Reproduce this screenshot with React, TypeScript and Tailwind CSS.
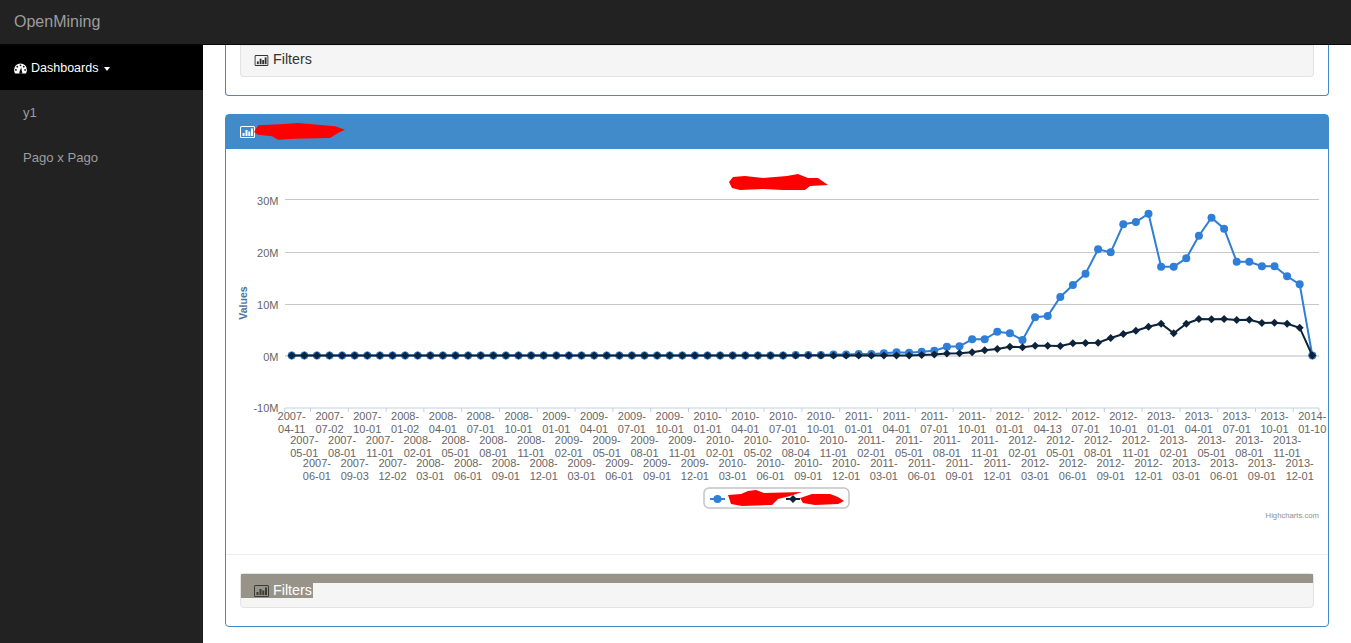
const SERIES_A = [
  ...Array(40).fill(355.5),
  355, 355, 355, 354.5, 354.5, 354, 354, 353.3, 352.3, 352.7, 351.7, 350.7, 346.7,
  346.3, 339.3, 339.3, 331.7, 333.3, 340, 317.3, 316, 297, 285, 273.7, 249.3, 252.3, 224.3, 222,
  213.7, 266.7, 266.7, 258.3, 235.7, 217.7, 228.7, 261.7, 261.7, 266.3, 266.3, 276.3, 284.3, 355.5,
];

const SERIES_B = [
  ...Array(47).fill(355.5),
  355.5, 355.5, 355.5, 355, 354.5, 353.5,
  353.3, 352.3, 350.3, 349, 346.7, 347.3, 345.7, 345.7, 346, 343.3, 343, 342.7, 338, 334,
  330.7, 326.7, 323.7, 333.3, 323.7, 319, 319.3, 319, 320, 319.7, 323, 322.7, 323.7, 327.7, 355.5,
];

// days that are not the first of the month, by yyyy-mm
const ODD_DAYS: Record<string, string> = {
  '2007-04': '11', '2007-07': '02', '2007-09': '03', '2007-12': '02', '2008-01': '02',
  '2010-05': '02', '2010-08': '04', '2012-04': '13', '2014-01': '10',
};

const pointX = (i: number) => 291.7 + i * 12.6;

const CATEGORIES = Array.from({ length: 82 }, (_, i) => {
  const total = 2007 * 12 + 3 + i;
  const year = Math.floor(total / 12);
  const month = String((total % 12) + 1).padStart(2, '0');
  return { year, rest: `${month}-${ODD_DAYS[`${year}-${month}`] ?? '01'}` };
});

const ROW_BASELINE = [420, 444, 467];

const Y_LABELS = [
  { text: '30M', y: 204.5 },
  { text: '20M', y: 257 },
  { text: '10M', y: 309 },
  { text: '0M', y: 361 },
  { text: '-10M', y: 412 },
];

function BarIcon({ className }: { className: string }) {
  return (
    <svg viewBox="0 0 15 12" className={className} fill="currentColor">
      <path fillRule="evenodd" d="M1.5 0h12A1.5 1.5 0 0 1 15 1.5v9a1.5 1.5 0 0 1-1.5 1.5h-12A1.5 1.5 0 0 1 0 10.500v-9A1.500 1.500 0 0 1 1.500 0Zm0 1a.5.5 0 0 0-.5.5v9a.5.5 0 0 0 .5.5h12a.5.5 0 0 0 .5-.5v-9a.5.5 0 0 0-.5-.5Z" />
      <rect x="2.500" y="7" width="2" height="3" />
      <rect x="5.500" y="4" width="2" height="6" />
      <rect x="8.300" y="5.500" width="2" height="4.500" />
      <rect x="11" y="2.500" width="2" height="7.500" />
    </svg>
  );
}

function GaugeIcon() {
  return (
    <svg viewBox="0 0 14 12" className="h-[11px] w-[13px] shrink-0">
      <path fill="#fff" d="M7 0.500a7 7 0 0 1 7 7c0 1.500-.4 2.900-1.200 4H1.200A7 7 0 0 1 0 7.500a7 7 0 0 1 7-7Z" />
      <g fill="#111">
        <circle cx="7" cy="2.500" r="1" />
        <circle cx="3.500" cy="4" r="1" />
        <circle cx="2" cy="7.500" r="1" />
        <circle cx="12" cy="7.500" r="1" />
        <circle cx="10.500" cy="4" r="1" />
        <path d="M7.800 4.500 8.700 9.500a1.600 1.600 0 1 1-3 .2Z" />
      </g>
    </svg>
  );
}

function Chart() {
  const lineA = SERIES_A.map((y, i) => `${pointX(i)},${y}`).join(' ');
  const lineB = SERIES_B.map((y, i) => `${pointX(i)},${y}`).join(' ');
  const ticks = [284.7, ...Array.from({ length: 28 }, (_, i) => 310.5 + i * 37.8), 1319];

  return (
    <svg viewBox="226 149 1102 405" className="block h-[405px] w-full">
      <path
        fill="#ff0000"
        d="M729 182 733 177 745 176 763 178 787 176 798 174 808 178 818 178 828 185 810 186 805 190 783 190 763 189 740 190 732 188Z"
      />
      {[199.5, 252.5, 304.5].map((y) => (
        <line key={y} x1="285" x2="1319" y1={y} y2={y} stroke="#c8c8c8" />
      ))}
      <line x1="285" x2="1319" y1="356" y2="356" stroke="#dddddd" strokeWidth="2" />
      <line x1="285" x2="1319" y1="408" y2="408" stroke="#c0d0e0" />
      {ticks.map((x) => (
        <line key={x} x1={x} x2={x} y1="408" y2="412" stroke="#c0d0e0" />
      ))}

      {Y_LABELS.map(({ text, y }) => (
        <text key={text} x="278.500" y={y} textAnchor="end" fontSize="11" fill="#666666">{text}</text>
      ))}
      <text
        transform="translate(247 303) rotate(-90)"
        textAnchor="middle"
        fontSize="10.500"
        fontWeight="bold"
        fill="#4d759e"
      >
        Values
      </text>

      {CATEGORIES.map(({ year, rest }, i) => {
        const base = ROW_BASELINE[i % 3];
        const x = pointX(i);
        return (
          <text key={i} textAnchor="middle" fontSize="11" fill="#666666">
            <tspan x={x} y={base}>{year}-</tspan>
            <tspan x={x} y={base + 13}>{rest}</tspan>
          </text>
        );
      })}

      <polyline points={lineA} fill="none" stroke="#2f7ed8" strokeWidth="2" />
      {SERIES_A.map((y, i) => (
        <circle key={i} cx={pointX(i)} cy={y} r="4" fill="#2f7ed8" />
      ))}
      <polyline points={lineB} fill="none" stroke="#0d233a" strokeWidth="2" />
      {SERIES_B.map((y, i) => {
        const x = pointX(i);
        return <path key={i} d={`M${x} ${y - 4}L${x + 4} ${y}L${x} ${y + 4}L${x - 4} ${y}Z`} fill="#0d233a" />;
      })}

      <rect x="704" y="488" width="145" height="20" rx="5" fill="#ffffff" stroke="#c4c4c4" strokeWidth="1.500" />
      <line x1="710" x2="725" y1="499" y2="499" stroke="#2f7ed8" strokeWidth="2" />
      <circle cx="717.500" cy="499" r="4" fill="#2f7ed8" />
      <line x1="786" x2="800" y1="499" y2="499" stroke="#0d233a" strokeWidth="2" />
      <path d="M793 495L797 499L793 503L789 499Z" fill="#0d233a" />
      <path
        fill="#ff0000"
        d="M728 495 741 494 748 491 756 490 764 493 802 492 790 496 778 499 772 505 742 506 731 504Z"
      />
      <path
        fill="#ff0000"
        d="M800 498 812 494 830 494 838 497 844 501 838 504 815 505 803 503Z"
      />

      <text x="1319" y="518" textAnchor="end" fontSize="7.700" fill="#909090">Highcharts.com</text>
    </svg>
  );
}

export default function App() {
  return (
    <div className="flex h-[643px] flex-col overflow-hidden bg-white font-['Liberation_Sans',Arial,sans-serif] text-[14.300px] text-[#333333]">
      <nav className="flex h-[45px] shrink-0 items-center border-b border-[#080808] bg-[#222222] px-[14px] pb-[1px] text-[16px] text-[#9d9d9d]">
        OpenMining
      </nav>
      <div className="flex min-h-0 flex-1">
        <aside className="w-[203px] shrink-0 bg-[#222222] text-[13.100px] text-[#9d9d9d]">
          <div className="flex h-[45px] items-center gap-[4px] bg-black pt-[2px] pl-[14px] text-[12.500px] text-white">
            <GaugeIcon />
            <span>Dashboards</span>
            <span className="ml-[2px] h-0 w-0 border-x-[3.500px] border-t-[4px] border-x-transparent border-t-white" />
          </div>
          <div className="flex h-[45px] items-center pl-[23px]">y1</div>
          <div className="flex h-[45px] items-center pl-[23px]">Pago x Pago</div>
        </aside>
        <main className="flex min-w-0 flex-1 flex-col gap-[18px] px-[22px]">
          <section className="rounded-b-[4px] border border-t-0 border-[#428bca] px-[14px] pb-[18px]">
            <div className="rounded-b-[4px] border border-t-0 border-[#e3e3e3] bg-[#f5f5f5] pt-[7px] pb-[8px] pl-[13px] shadow-[inset_0_1px_1px_rgba(0,0,0,0.05)]">
              <div className="flex h-[16px] items-center gap-[4px]">
                <BarIcon className="h-[11px] w-[15px]" />
                <span>Filters</span>
              </div>
            </div>
          </section>

          <section className="rounded-[4px] border border-[#428bca]">
            <header className="flex h-[34px] items-center bg-[#428bca] pl-[14px] text-white">
              <BarIcon className="h-[12px] w-[15px] shrink-0" />
              <svg viewBox="0 0 94 18" className="-ml-[1px] h-[18px] w-[94px]">
                <path
                  fill="#ff0000"
                  d="M0 9 4.300 2.300 31 1 44 0 64 1.700 81 3.300 91 6.700 84 10 76 15 41 15.700 24 16.700 18 13.300 4 11.700Z"
                />
              </svg>
            </header>
            <Chart />
            <div className="border-t border-[#eeeeee] px-[14px] pt-[18px] pb-[18px]">
              <div className="rounded-[4px] border border-[#e3e3e3] bg-[#f5f5f5]">
                <div className="h-[9px] bg-[#989389]" />
                <div className="flex h-[15px] w-[72px] items-center gap-[4px] bg-[#989389] pl-[13px] text-white">
                  <BarIcon className="h-[12px] w-[15px] shrink-0 text-[#3d3b36]" />
                  <span>Filters</span>
                </div>
                <div className="h-[9px]" />
              </div>
            </div>
          </section>
        </main>
      </div>
    </div>
  );
}
